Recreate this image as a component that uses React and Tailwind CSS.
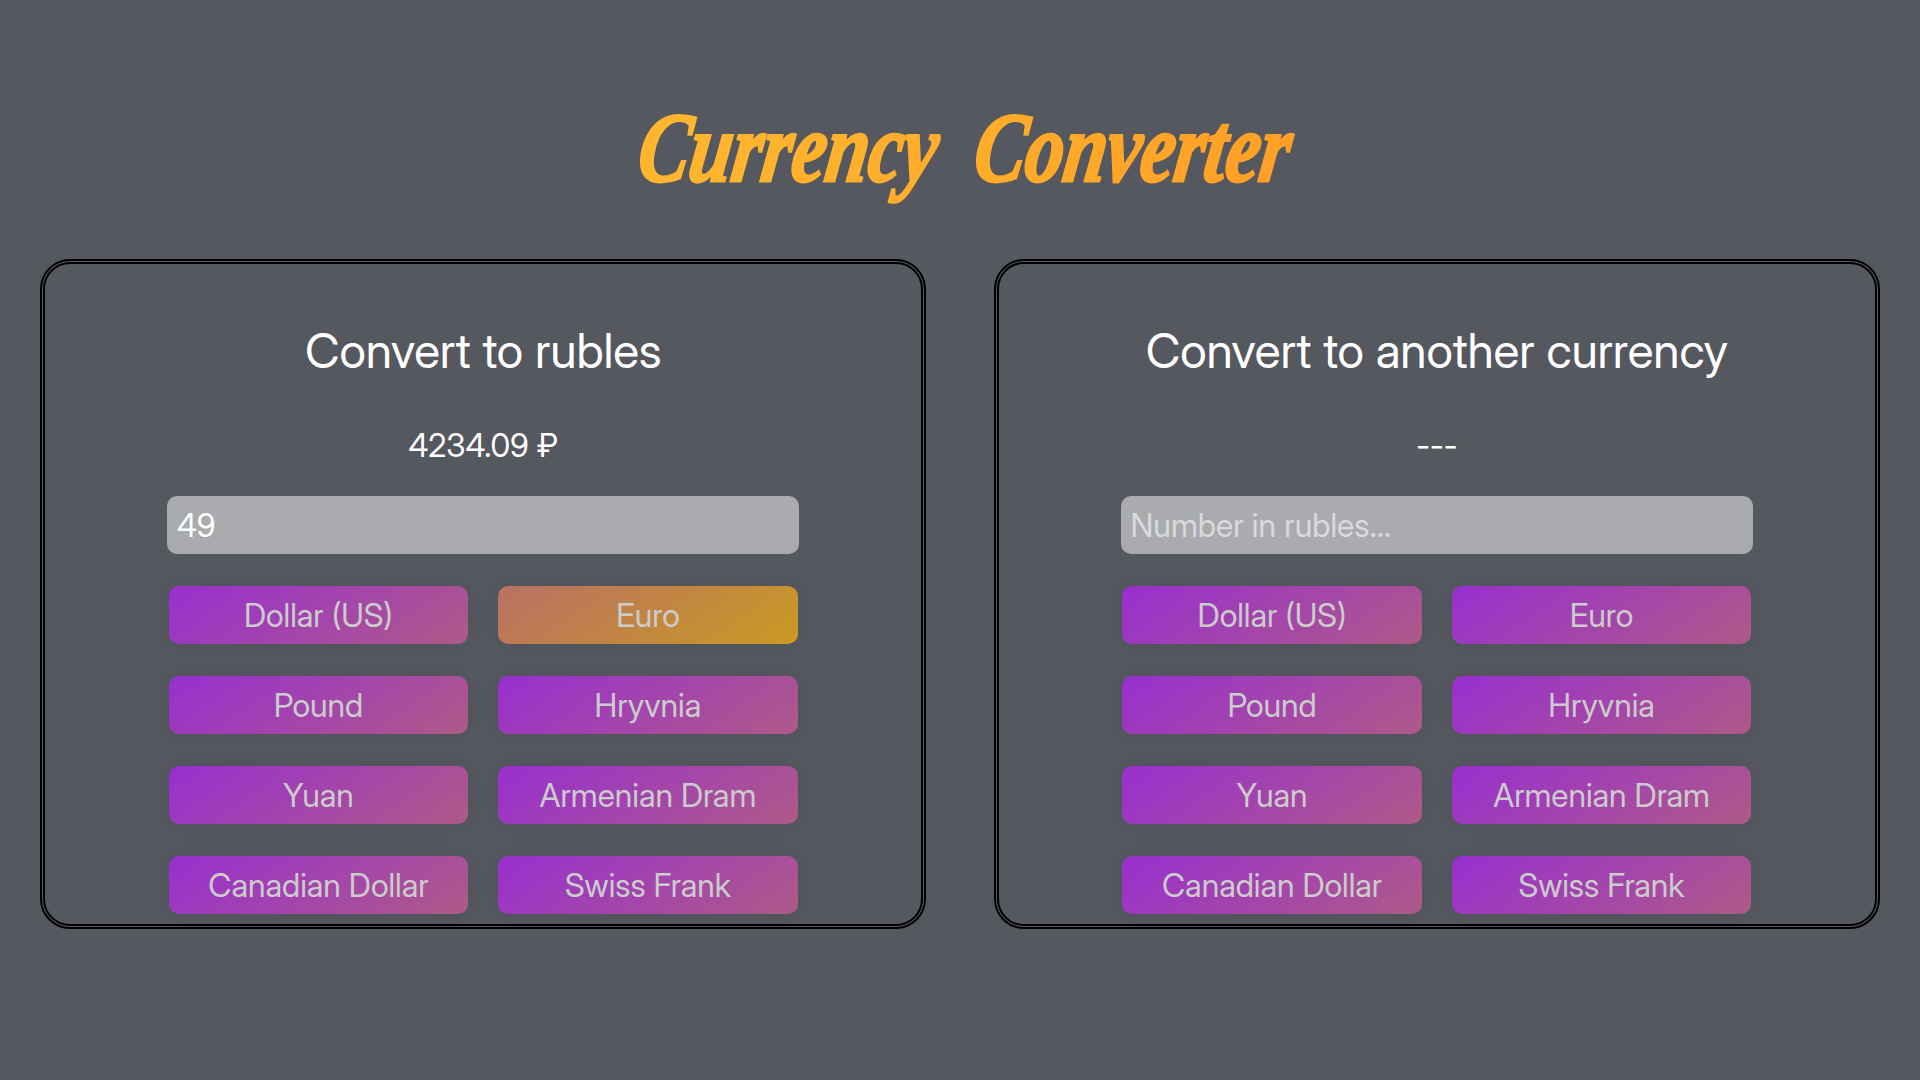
const currencies = [
  'Dollar (US)', 'Euro', 'Pound', 'Hryvnia',
  'Yuan', 'Armenian Dram', 'Canadian Dollar', 'Swiss Frank',
];

function Panel({ title, result, value, placeholder, active }) {
  return (
    <section className="flex h-[670px] w-[886.4px] flex-col items-center rounded-[30px] border-2 border-black p-[3px] outline-2 -outline-offset-5 outline-black">
      <h2 className="mt-[58px] text-[48px] leading-[58px] font-normal tracking-[-0.13px] text-white">{title}</h2>
      <p className="mt-[46px] mb-px text-[32px] leading-[39px] text-white">{result}</p>
      <input
        className="mt-[30px] h-[58px] w-[632.6px] shrink-0 rounded-[10px] bg-[#aaabaf] px-[10px] text-[32px] text-white outline-none placeholder:tracking-[0.1px] placeholder:text-[#d9dadb]"
        defaultValue={value}
        placeholder={placeholder}
      />
      <div className="mt-8 grid w-[629px] grid-cols-2 gap-x-[30px] gap-y-8">
        {currencies.map((name) => (
          <button
            key={name}
            className={
              name === active
                ? 'h-[58px] rounded-[10px] bg-[linear-gradient(145deg,#b97065,#ca9a22)] pt-[2px] text-[32px] font-normal text-[#cccccc] shadow-[0_0_20px_rgba(0,0,0,0.08)]'
                : 'h-[58px] rounded-[10px] bg-[linear-gradient(145deg,#982fd0,#ae5a88)] pt-[2px] text-[32px] font-normal text-[#cccccc] shadow-[0_0_20px_rgba(0,0,0,0.08)]'
            }
          >
            {name}
          </button>
        ))}
      </div>
    </section>
  );
}

export default function App() {
  return (
    <main className="h-[1080px] overflow-hidden bg-[#55585f] px-10 font-['Inter_Display','Inter',sans-serif]">
      <h1 className="flex h-[259px] items-start pt-[90px] pl-[595px] font-['Liberation_Serif',serif] text-[99px] leading-[116px] font-bold italic whitespace-nowrap">
        <span className="w-[336px]">
          <span className="inline-block origin-[0_92px] [transform:skewX(-8deg)_scaleX(0.775)] bg-linear-to-r from-[#ffb62f] to-[#ffad2c] bg-clip-text pr-4 text-transparent [-webkit-text-stroke:3px_transparent]">Currency</span>
        </span>
        <span>
          <span className="inline-block origin-[0_92px] [transform:skewX(-8deg)_scaleX(0.775)] bg-linear-to-r from-[#ffac2b] to-[#ff9f26] bg-clip-text pr-4 text-transparent [-webkit-text-stroke:3px_transparent]">Converter</span>
        </span>
      </h1>
      <div className="flex justify-between">
        <Panel title="Convert to rubles" result="4234.09 ₽" value="49" placeholder="Number in currency..." active="Euro" />
        <Panel title="Convert to another currency" result="---" placeholder="Number in rubles..." />
      </div>
    </main>
  );
}
